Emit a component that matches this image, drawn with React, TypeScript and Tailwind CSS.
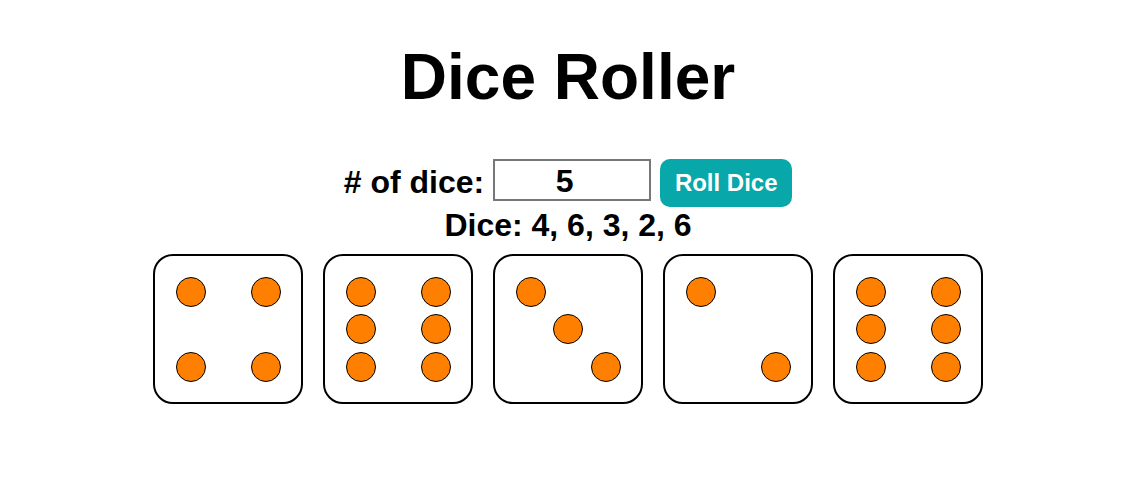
import { useState } from 'react'

// pip positions on a 3x3 grid (row, col), 1-based
const PIPS: Record<number, [number, number][]> = {
  1: [[2, 2]],
  2: [[1, 1], [3, 3]],
  3: [[1, 1], [2, 2], [3, 3]],
  4: [[1, 1], [1, 3], [3, 1], [3, 3]],
  5: [[1, 1], [1, 3], [2, 2], [3, 1], [3, 3]],
  6: [[1, 1], [1, 3], [2, 1], [2, 3], [3, 1], [3, 3]],
}

const ROW = ['row-start-1', 'row-start-2', 'row-start-3']
const COL = ['col-start-1', 'col-start-2', 'col-start-3']

function Die({ value }: { value: number }) {
  return (
    <div className="w-[150px] h-[150px] mx-[10px] border-2 border-black rounded-[20px] bg-white
                    grid grid-cols-[repeat(3,37.5px)] grid-rows-[repeat(3,37.5px)] justify-center content-center
                    box-border">
      {PIPS[value].map(([r, c], i) => (
        <div key={i}
          className={`${ROW[r - 1]} ${COL[c - 1]} w-[30px] h-[30px] rounded-full bg-[#ff7f00]
                      border border-black self-center justify-self-center`} />
      ))}
    </div>
  )
}

export default function App() {
  const [count, setCount] = useState('5')
  const [dice, setDice] = useState<number[]>([4, 6, 3, 2, 6])

  function roll() {
    const n = Math.max(1, Math.min(20, parseInt(count) || 1))
    setDice(Array.from({ length: n }, () => 1 + Math.floor(Math.random() * 6)))
  }

  return (
    <div className="min-h-[480px] bg-white text-black flex flex-col items-center pr-[4px]"
      style={{ fontFamily: '"Liberation Sans", Arial, sans-serif' }}>
      <h1 className="text-[64px] font-bold leading-none mt-[45px]">Dice Roller</h1>

      <div className="flex items-start gap-[9px] mt-[50px]">
        <label className="text-[32px] font-bold leading-none mt-[7px]">
          # of dice:
        </label>
        <input
          type="text"
          value={count}
          onChange={e => setCount(e.target.value)}
          className="w-[158px] h-[42px] border-2 border-[#777777] text-center text-[32px] font-bold
                     leading-none pr-[15px] pt-[2px] focus:outline-none"
        />
        <button onClick={roll}
          className="w-[132px] h-[48px] rounded-[10px] bg-[#08a7a9] text-white text-[24px] font-bold">
          Roll Dice
        </button>
      </div>

      <p className="text-[32px] font-bold leading-none mt-[2px]">
        Dice: {dice.join(', ')}
      </p>

      <div className="flex justify-center mt-[13px]">
        {dice.map((d, i) => <Die key={i} value={d} />)}
      </div>
    </div>
  )
}
